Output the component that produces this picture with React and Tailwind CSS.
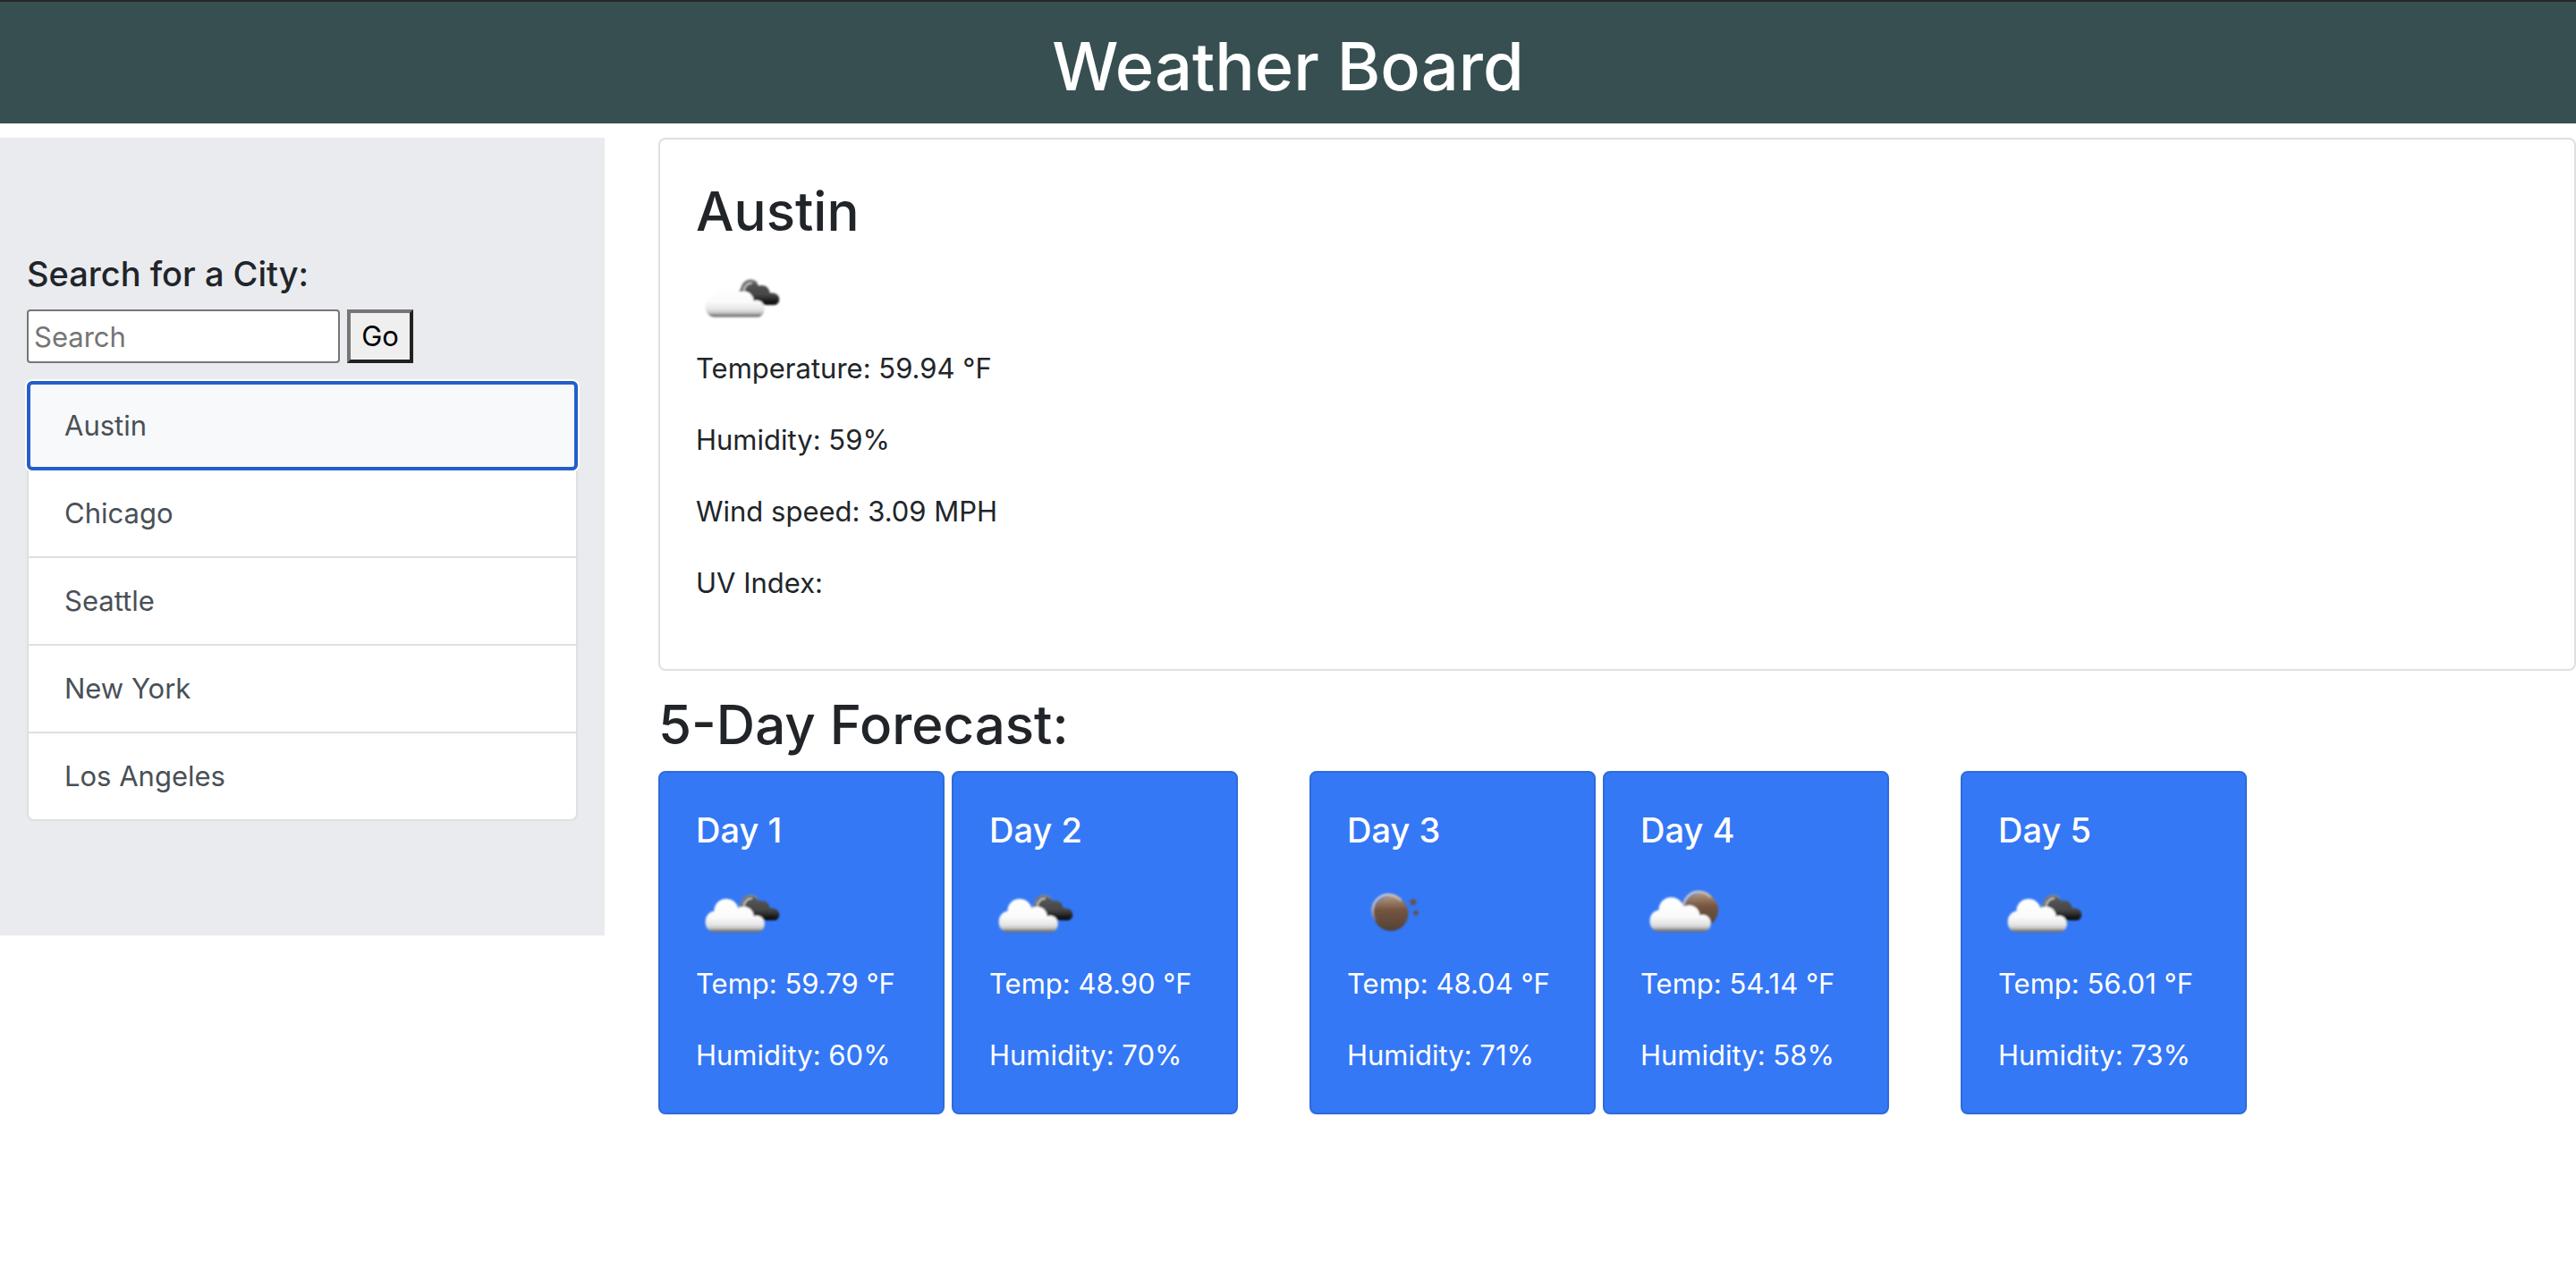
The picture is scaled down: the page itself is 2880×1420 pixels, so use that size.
import { useState } from "react";

const cities = ["Austin", "Chicago", "Seattle", "New York", "Los Angeles"];

const forecast = [
  [
    { day: 1, icon: "broken", temp: "59.79", humidity: 60 },
    { day: 2, icon: "broken", temp: "48.90", humidity: 70 },
  ],
  [
    { day: 3, icon: "clear", temp: "48.04", humidity: 71 },
    { day: 4, icon: "few", temp: "54.14", humidity: 58 },
  ],
  [{ day: 5, icon: "broken", temp: "56.01", humidity: 73 }],
];

function Defs({ id }) {
  return (
    <defs>
      <linearGradient id={`${id}-white`} gradientUnits="userSpaceOnUse" x1="0" y1="27" x2="0" y2="66">
        <stop offset="0" stopColor="#ffffff" />
        <stop offset="0.55" stopColor="#fbfbfb" />
        <stop offset="0.78" stopColor="#e4e4e4" />
        <stop offset="0.88" stopColor="#c4c4c4" />
        <stop offset="0.95" stopColor="#7d7d7d" />
        <stop offset="1" stopColor="#6a6a6a" />
      </linearGradient>
      <linearGradient id={`${id}-dark`} gradientUnits="userSpaceOnUse" x1="0" y1="25" x2="0" y2="53">
        <stop offset="0" stopColor="#5c5c5c" />
        <stop offset="0.6" stopColor="#454545" />
        <stop offset="0.85" stopColor="#1c1c1c" />
        <stop offset="1" stopColor="#050505" />
      </linearGradient>
      <linearGradient id={`${id}-moon`} x1="0" y1="0" x2="0" y2="1">
        <stop offset="0" stopColor="#b09a8a" />
        <stop offset="0.2" stopColor="#94745c" />
        <stop offset="0.4" stopColor="#745440" />
        <stop offset="0.7" stopColor="#644c3c" />
        <stop offset="1" stopColor="#4f4037" />
      </linearGradient>
      <linearGradient id={`${id}-shine`} x1="0" y1="0" x2="0.3" y2="1">
        <stop offset="0" stopColor="#e2d8d0" />
        <stop offset="0.5" stopColor="#c8b09f" />
        <stop offset="1" stopColor="#c3a48f" stopOpacity="0" />
      </linearGradient>
      <filter id={`${id}-soft`} x="-10%" y="-10%" width="120%" height="120%">
        <feGaussianBlur stdDeviation="0.8" />
      </filter>
    </defs>
  );
}

function Moon({ id, cx, cy, r }) {
  return (
    <g>
      <circle cx={cx} cy={cy} r={r} fill={`url(#${id}-moon)`} />
      <path
        d={`M${cx - r + 4} ${cy + 10} A${r - 1} ${r - 1} 0 0 1 ${cx + r - 6} ${cy - r + 7} A${r - 1} ${r - 1} 0 0 0 ${cx - r + 4} ${cy + 10}Z`}
        fill={`url(#${id}-shine)`}
      />
      <path
        d={`M${cx - r + 3} ${cy + 8} A${r - 2} ${r - 2} 0 0 1 ${cx + r - 8} ${cy - r + 5}`}
        fill="none"
        stroke={`url(#${id}-shine)`}
        strokeWidth="2.500"
      />
    </g>
  );
}

function WhiteCloud({ id }) {
  return (
    <path
      d="M20 66 C14 65 10.5 60 10.5 54 C10.5 47 14.500 42.500 20.500 41.500 C20.500 33.500 26.500 27.300 34.500 27.300 C41 27.300 46.500 31.500 48.300 37.800 C50.500 36.600 53 36.100 55.500 36.300 C61.500 36.800 66 41.500 66.300 47.300 C72.500 45 78.700 49.500 78.700 56 C78.700 60.800 76 64.800 72 66 Z"
      fill={`url(#${id}-white)`}
    />
  );
}

function WeatherIcon({ kind, id }) {
  return (
    <svg viewBox="0 0 100 100" className="block size-25" role="img" aria-label={`${kind} sky`}>
      <Defs id={id} />
      <g filter={`url(#${id}-soft)`}>
        {kind === "clear" && (
          <>
            <Moon id={id} cx={49} cy={45.5} r={19.5} />
            <path fill="#69503f" d="M74 27.500l1.500 3.300 3.600.2-2.800 2.300 1 3.700-3.300-2.100-3.300 2.100 1-3.700-2.800-2.300 3.600-.2z" />
            <path fill="#69503f" d="M77 40.500l1.200 2.700 3 .2-2.300 1.900.8 3-2.700-1.700-2.700 1.700.8-3-2.300-1.900 3-.2z" />
          </>
        )}
        {kind === "few" && (
          <>
            <Moon id={id} cx={68} cy={41.5} r={19} />
            <WhiteCloud id={id} />
          </>
        )}
        {kind === "broken" && (
          <>
            <path
              fill={`url(#${id}-dark)`}
              d="M52 53 L50 37 C50 30 54.500 24.700 60.500 24.700 C65 24.700 68.500 27.500 70 31.500 C76 29.500 82.500 33 82.800 39.800 C88.500 38.500 93.300 42 93.300 46.500 C93.300 50 91 53 87.500 53 Z"
            />
            <path
              d="M48 38 C50 36.500 51 35.500 51.500 33.500 C53 28 57.500 24.500 62 25 C65 25.300 67 26.500 68.500 28.500"
              fill="none"
              stroke="#8f8f8f"
              strokeWidth="1.500"
            />
            <path
              d="M53.500 38.500 C54 32 57.500 28.500 63 28.300"
              fill="none"
              stroke="#c9c9c9"
              strokeWidth="2"
            />
            <g transform="translate(0.500 2.500) scale(0.970)">
              <WhiteCloud id={id} />
            </g>
          </>
        )}
      </g>
    </svg>
  );
}

function Sidebar() {
  const [active, setActive] = useState("Austin");
  return (
    <aside className="bg-[#eaebef] px-[30px] py-32">
      <form onSubmit={(e) => e.preventDefault()}>
        <label htmlFor="city" className="mb-4 block text-[38px] leading-12 font-medium">
          Search for a City:
        </label>
        <div className="mb-5 flex gap-2">
          <input
            id="city"
            type="text"
            placeholder="Search"
            className="h-15 w-[350px] rounded-[4px] border-2 border-[#767676] bg-white px-1.5 text-black placeholder:text-[#757575]"
          />
          <button
            type="submit"
            className="h-15 w-[74px] border-4 border-t-[#767676] border-r-[#212121] border-b-[#212121] border-l-[#767676] bg-[#efefef] text-black"
          >
            Go
          </button>
        </div>
      </form>
      <div className="flex flex-col rounded-lg border-2 border-[#dfdfdf] bg-white">
        {cities.map((city) => (
          <button
            key={city}
            type="button"
            onClick={() => setActive(city)}
            className={
              city === active
                ? "relative z-10 rounded-[4px] border-[#dfdfdf] bg-[#f8f9fa] px-10 py-6 text-left text-[#495057] ring-4 ring-white outline-4 -outline-offset-2 outline-[#245fc9] not-first:border-t-2"
                : "border-[#dfdfdf] px-10 py-6 text-left text-[#495057] not-first:border-t-2"
            }
          >
            {city}
          </button>
        ))}
      </div>
    </aside>
  );
}

function CurrentWeather() {
  return (
    <section className="rounded-lg border-2 border-[#dfdfdf] bg-white p-10">
      <h2 className="mb-3 text-[60px] leading-20 font-medium">Austin</h2>
      <WeatherIcon kind="broken" id="now" />
      <p className="mb-8">Temperature: 59.94 °F</p>
      <p className="mb-8">Humidity: 59%</p>
      <p className="mb-8">Wind speed: 3.09 MPH</p>
      <p className="mb-8">UV Index:</p>
    </section>
  );
}

function DayCard({ day, icon, temp, humidity }) {
  return (
    <article className="w-80 rounded-lg border-2 border-[#2f6bd9] bg-[#3478f6] p-10 whitespace-nowrap text-white">
      <h3 className="mb-6 text-[38px] leading-12 font-medium">Day {day}</h3>
      <WeatherIcon kind={icon} id={`day${day}`} />
      <p className="mb-8">Temp: {temp} °F</p>
      <p>Humidity: {humidity}%</p>
    </article>
  );
}

export default function App() {
  return (
    <div className="min-h-screen bg-white font-['Inter',sans-serif] text-[31px] leading-12 text-[#212529]">
      <header className="mb-4 border-t-2 border-[#272727] bg-[#374f50] pt-6 pb-4 text-center text-white">
        <h1 className="text-[74px] leading-24 font-medium">Weather Board</h1>
      </header>
      <main className="grid grid-cols-[676fr_2144fr] items-start gap-15">
        <Sidebar />
        <div>
          <CurrentWeather />
          <h2 className="mt-5 mb-3 text-[60px] leading-20 font-medium">5-Day Forecast:</h2>
          <div className="flex flex-wrap gap-20">
            {forecast.map((group) => (
              <div key={group[0].day} className="flex gap-2">
                {group.map((d) => (
                  <DayCard key={d.day} {...d} />
                ))}
              </div>
            ))}
          </div>
        </div>
      </main>
    </div>
  );
}
